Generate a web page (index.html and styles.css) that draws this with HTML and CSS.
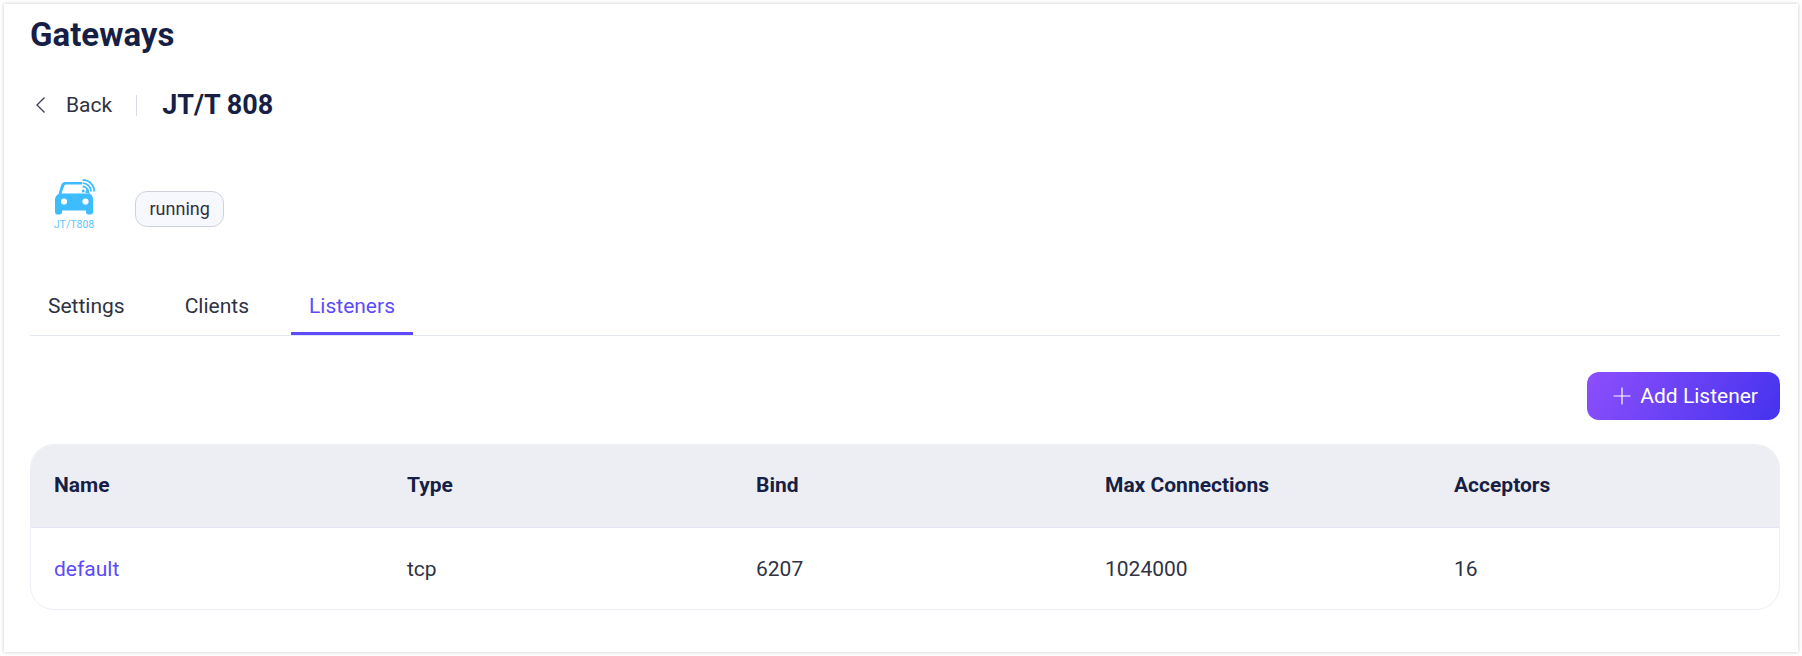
FILE: index.html
```html
<!DOCTYPE html>
<html lang="en">
<head>
  <meta charset="UTF-8">
  <title>Gateways</title>
  <link rel="stylesheet" href="styles.css">
</head>
<body>
  <div class="card">
    <h1>Gateways</h1>
    <div class="detail-head">
      <a class="back">
        <svg width="14" height="18" viewBox="0 0 14 18" fill="none" stroke="#3b3f52" stroke-width="1.3"><path d="M10.500 1.500 3 9l7.500 7.500"/></svg>
        <span>Back</span>
      </a>
      <span class="divider"></span>
      <h2>JT/T 808</h2>
    </div>
    <div class="gateway-info">
      <div class="logo">
        <svg width="42" height="36" viewBox="0 0 42 36">
          <path fill="#3dbcff" d="M11 3H28v2.600H12.500c-1.200 0-2 .6-2.400 1.600L7.500 14.500H35.500c2 1.200 3.500 3 3.500 5.500V33.300c0 1.200-.9 2.200-2 2.200h-3c-1.100 0-2-1-2-2.200V31.500H8v1.800c0 1.200-.9 2.200-2 2.200H3c-1.100 0-2-1-2-2.200V20.500c0-2.500 1.500-4.300 3.500-5.500L7 6.500C7.800 4.200 9 3 11 3z"/>
          <path fill="#3dbcff" d="M31 13.500 34 8.500l1.800 6.500z"/>
          <circle cx="10" cy="22.500" r="3.100" fill="#fff"/>
          <circle cx="31.500" cy="22.500" r="3.100" fill="#fff"/>
          <g fill="none" stroke="#fff" stroke-width="3.500">
            <path d="M28.700 .500a12 12 0 0 1 12 12"/>
            <path d="M28.700 4a8.500 8.500 0 0 1 8.500 8.500"/>
          </g>
          <g fill="none" stroke="#3dbcff" stroke-width="1.800">
            <path d="M28.700 .900a11.600 11.600 0 0 1 11.600 11.600"/>
            <path d="M28.700 4.200a8.300 8.300 0 0 1 8.300 8.300"/>
            <path d="M28.700 7.500a5 5 0 0 1 5 5"/>
          </g>
          <circle cx="29.200" cy="12" r="1.500" fill="#3dbcff"/>
        </svg>
        <span class="logo-name">JT/T808</span>
      </div>
      <span class="status">running</span>
    </div>
    <div class="tabs">
      <a class="tab">Settings</a>
      <a class="tab">Clients</a>
      <a class="tab active">Listeners</a>
    </div>
    <div class="toolbar">
      <button type="button">
        <svg width="18" height="18" viewBox="0 0 18 18" stroke="#fff" stroke-width="1.200"><path d="M9 .500v17M.500 9h17"/></svg>
        Add Listener
      </button>
    </div>
    <div class="table-wrap">
      <table>
        <tr>
          <th>Name</th>
          <th>Type</th>
          <th>Bind</th>
          <th>Max Connections</th>
          <th>Acceptors</th>
        </tr>
        <tr>
          <td><a class="link">default</a></td>
          <td>tcp</td>
          <td>6207</td>
          <td>1024000</td>
          <td>16</td>
        </tr>
      </table>
    </div>
  </div>
</body>
</html>
```

FILE: styles.css
```css
body {
  margin: 0;
  background: #fff;
  font-family: Roboto, Arial, sans-serif;
  color: #2f3243;
}
.card {
  box-sizing: border-box;
  width: 1794px;
  height: 648px;
  margin: 4px;
  padding: 0 18px 0 26px;
  background: #fff;
  box-shadow: 0 0 4px rgba(0,0,0,0.22);
}
h1 {
  margin: 0;
  padding-top: 11px;
  font-size: 33px;
  line-height: 40px;
  font-weight: 700;
  color: #181f45;
}
.detail-head {
  display: flex;
  align-items: center;
  margin-top: 32px;
  height: 36px;
}
.back {
  display: flex;
  align-items: center;
  gap: 18px;
  font-size: 21px;
  padding-left: 4px;
}
.back svg {
  display: block;
}
.divider {
  width: 1px;
  height: 21px;
  background: #d9dce6;
  margin: 0 25px 0 24px;
}
h2 {
  margin: 0;
  font-size: 27px;
  font-weight: 700;
  color: #181f45;
}
.gateway-info {
  display: flex;
  align-items: center;
  margin-top: 58px;
  height: 56px;
}
.logo {
  display: flex;
  flex-direction: column;
  align-items: center;
  width: 42px;
  margin: 0 0 10px 24px;
}
.logo svg {
  display: block;
}
.logo-name {
  font-size: 10.500px;
  line-height: 11px;
  margin: 4px 2px 0 0;
  color: #5cc6ff;
  white-space: nowrap;
}
.status {
  box-sizing: border-box;
  height: 36px;
  margin-left: 39px;
  padding: 0 13.500px;
  line-height: 34px;
  font-size: 18px;
  background: #f7f8fd;
  border: 1px solid #cfd2de;
  border-radius: 12px;
}
.tabs {
  display: flex;
  margin-top: 44px;
  height: 55px;
  border-bottom: 1px solid #e2e6f3;
  box-sizing: border-box;
}
.tab {
  padding: 0 18px;
  margin-right: 24px;
  font-size: 21px;
  line-height: 51px;
  height: 54px;
}
.tab.active {
  color: #5d4bfb;
  height: 51px;
  border-bottom: 3px solid #5d4bfb;
}
.toolbar {
  display: flex;
  justify-content: flex-end;
  margin-top: 36px;
}
button {
  display: flex;
  align-items: center;
  gap: 9px;
  height: 48px;
  padding: 0 22px 0 26px;
  border: none;
  border-radius: 12px;
  background: linear-gradient(120deg, #8d4ffc 0%, #4433ee 100%);
  color: #fff;
  font-family: inherit;
  font-size: 21px;
}
.table-wrap {
  margin-top: 24px;
  border: 1px solid #eeeef6;
  border-radius: 24px;
  overflow: hidden;
}
table {
  width: 100%;
  border-collapse: collapse;
  table-layout: fixed;
  font-size: 21px;
}
th {
  height: 82px;
  padding: 0 0 1px 24px;
  box-sizing: border-box;
  text-align: left;
  font-weight: 700;
  color: #181f45;
  background: #edeef4;
  border-bottom: 1px solid #e2e6f3;
}
td {
  height: 82px;
  padding: 1px 0 0 24px;
  box-sizing: border-box;
}
th:first-child {
  width: 352px;
  padding-left: 23px;
}
td:first-child {
  padding-left: 23px;
}
.link {
  color: #5d4bfb;
}
```
